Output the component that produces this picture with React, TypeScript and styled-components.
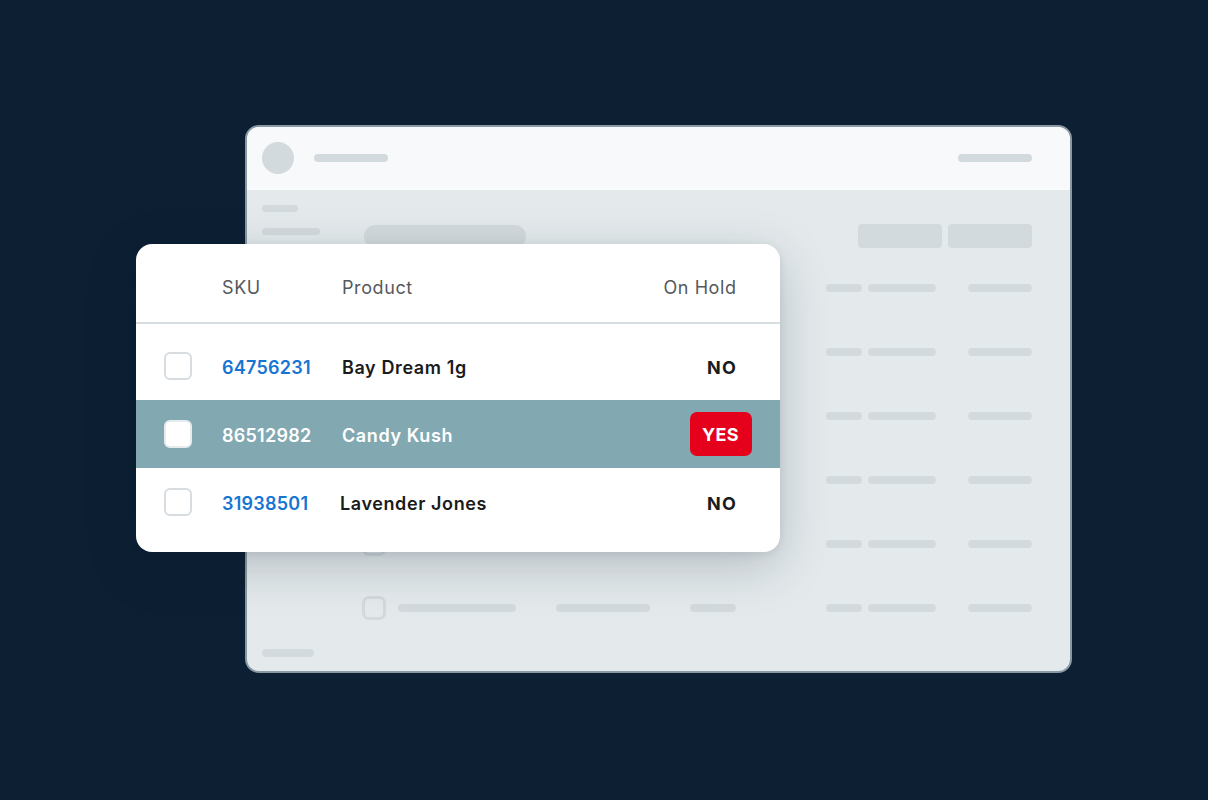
import React from "react";
import styled, { createGlobalStyle } from "styled-components";

const Global = createGlobalStyle`
  html, body { margin: 0; padding: 0; }
  body {
    background: #0c1f33;
    font-family: Inter, "Noto Sans", "Liberation Sans", sans-serif;
    width: 1208px;
    height: 800px;
    overflow: hidden;
  }
  * { box-sizing: border-box; }
`;

const Stage = styled.div`
  position: relative;
  width: 1208px;
  height: 800px;
  padding: 125px 0 0 245px;
`;

const Window = styled.div`
  width: 827px;
  height: 548px;
  border: 2px solid #8a98a3;
  border-radius: 14px;
  overflow: hidden;
  display: flex;
  flex-direction: column;
  background: #e4eaec;
`;

const WinHeader = styled.div`
  height: 63px;
  flex: none;
  background: #f7f9fa;
  border-bottom: 1px solid #fbfcfd;
  display: flex;
  align-items: center;
  padding: 0 38px 0 15px;
`;

const Avatar = styled.div`
  width: 32px;
  height: 32px;
  border-radius: 50%;
  background: #d3dadd;
`;

const Bar = styled.div<{ $w: number; $h?: number; $ml?: number; $r?: number }>`
  flex: none;
  width: ${(p) => p.$w}px;
  height: ${(p) => p.$h ?? 8}px;
  margin-left: ${(p) => p.$ml ?? 0}px;
  border-radius: ${(p) => p.$r ?? 4}px;
  background: #d3dadd;
`;

const Spacer = styled.div`
  flex: 1;
`;

const WinBody = styled.div`
  flex: 1;
  display: grid;
  grid-template-columns: 100px 1fr;
  padding: 15px 38px 14px 15px;
`;

const Sidebar = styled.div`
  display: flex;
  flex-direction: column;
  gap: 16px;
`;

const Main = styled.div`
  padding-top: 19px;
  display: flex;
  flex-direction: column;
`;

const Toolbar = styled.div`
  height: 24px;
  display: flex;
  align-items: center;
  gap: 6px;
  margin-bottom: 8px;
`;

const SkelRow = styled.div`
  height: 64px;
  display: flex;
  align-items: center;
`;

const SkelCheck = styled.div`
  width: 24px;
  height: 24px;
  border: 3px solid #d3dadd;
  border-radius: 7px;
  flex: none;
`;

const Card = styled.div`
  position: absolute;
  left: 136px;
  top: 244px;
  width: 644px;
  height: 308px;
  background: #ffffff;
  border-radius: 16px;
  overflow: hidden;
  box-shadow: 0 14px 50px rgba(12, 31, 51, 0.22), 0 2px 8px rgba(12, 31, 51, 0.08);
`;

const Grid = styled.div`
  display: grid;
  grid-template-columns: 58px 120px 1fr auto;
  align-items: center;
  padding: 0 44px 0 28px;
`;

const Head = styled(Grid)`
  height: 80px;
  padding-top: 8px;
  border-bottom: 2px solid #d6dee1;
  color: #55595d;
  font-size: 18px;
  font-weight: 400;
  letter-spacing: 0.6px;
`;

const HeadCell = styled.div<{ $right?: boolean }>`
  text-align: ${(p) => (p.$right ? "right" : "left")};
  margin-right: ${(p) => (p.$right ? "-0.6px" : "0")};
`;

const TBody = styled.div`
  padding-top: 8px;
`;

const Row = styled(Grid)<{ $active?: boolean }>`
  height: 68px;
  background: ${(p) => (p.$active ? "#82a8b2" : "transparent")};
  font-size: 18px;
  padding-top: 2px;
`;

const Check = styled.div<{ $active?: boolean }>`
  width: 28px;
  height: 28px;
  border-radius: 6px;
  border: 2px solid ${(p) => (p.$active ? "#e6ecee" : "#d6dcdf")};
  background: #ffffff;
  margin-top: -2px;
`;

const Sku = styled.div<{ $active?: boolean }>`
  color: ${(p) => (p.$active ? "#ffffff" : "#1675d3")};
  font-weight: 600;
  letter-spacing: 0.25px;
`;

const Product = styled.div<{ $active?: boolean; $shift?: number }>`
  color: ${(p) => (p.$active ? "#ffffff" : "#1a1b1c")};
  font-weight: 600;
  letter-spacing: 0.6px;
  margin-left: ${(p) => p.$shift ?? 0}px;
`;

const Hold = styled.div`
  color: #1a1b1c;
  font-weight: 700;
  text-align: right;
  letter-spacing: 1.4px;
  margin-right: -1.4px;
`;

const Badge = styled.div`
  background: #e5001b;
  color: #ffffff;
  font-weight: 700;
  letter-spacing: 0.4px;
  border-radius: 7px;
  height: 44px;
  padding: 0 13px 0 12px;
  display: flex;
  align-items: center;
  margin-right: -16px;
  margin-top: -2px;
`;

const rowsData = [
  { sku: "64756231", product: "Bay Dream 1g", hold: "NO" },
  { sku: "86512982", product: "Candy Kush", hold: "YES", active: true },
  { sku: "31938501", product: "Lavender Jones", hold: "NO", shift: -2 },
];

export default function App() {
  return (
    <>
      <Global />
      <Stage>
        <Window>
          <WinHeader>
            <Avatar />
            <Bar $w={74} $ml={20} />
            <Spacer />
            <Bar $w={74} />
          </WinHeader>
          <WinBody>
            <Sidebar>
              <Bar $w={36} $h={7} />
              <Bar $w={58} $h={7} />
              <Spacer />
              <Bar $w={52} />
            </Sidebar>
            <Main>
              <Toolbar>
                <Bar $w={162} $h={23} $r={12} $ml={2} />
                <Spacer />
                <Bar $w={84} $h={24} $r={4} />
                <Bar $w={84} $h={24} $r={4} />
              </Toolbar>
              {Array.from({ length: 6 }).map((_, i) => (
                <SkelRow key={i}>
                  <SkelCheck />
                  <Bar $w={118} $ml={12} />
                  <Bar $w={94} $ml={40} />
                  <Bar $w={46} $ml={40} />
                  <Bar $w={36} $ml={90} />
                  <Bar $w={68} $ml={6} />
                  <Bar $w={64} $ml={32} />
                </SkelRow>
              ))}
            </Main>
          </WinBody>
        </Window>
        <Card>
          <Head>
            <div />
            <HeadCell>SKU</HeadCell>
            <HeadCell>Product</HeadCell>
            <HeadCell $right>On Hold</HeadCell>
          </Head>
          <TBody>
            {rowsData.map((r) => (
              <Row key={r.sku} $active={r.active}>
                <Check $active={r.active} />
                <Sku $active={r.active}>{r.sku}</Sku>
                <Product $active={r.active} $shift={r.shift}>
                  {r.product}
                </Product>
                {r.hold === "YES" ? <Badge>{r.hold}</Badge> : <Hold>{r.hold}</Hold>}
              </Row>
            ))}
          </TBody>
        </Card>
      </Stage>
    </>
  );
}
